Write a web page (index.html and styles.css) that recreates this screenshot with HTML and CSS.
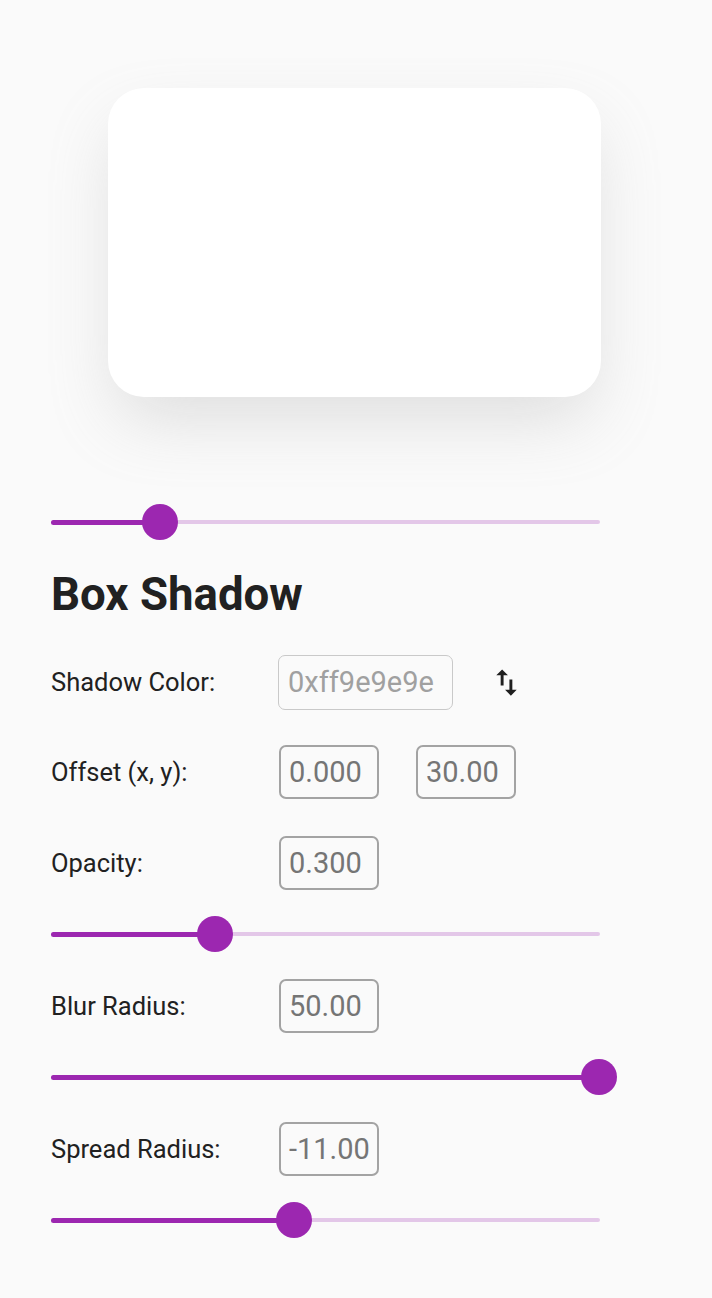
FILE: index.html
```html
<!DOCTYPE html>
<html>
<head>
<meta charset="utf-8">
<link rel="stylesheet" href="styles.css">
</head>
<body>
<div class="page">
  <div class="preview">
    <div class="card"></div>
  </div>
  <div class="controls">
    <div class="slider slider-top">
      <div class="track"></div>
      <div class="fill" style="width: 19.85%"></div>
      <div class="thumb" style="left: 19.85%"></div>
    </div>
    <h1 class="title">Box Shadow</h1>

    <div class="field-row row-first">
      <span class="label">Shadow Color:</span>
      <div class="input input-wide input-muted">0xff9e9e9e</div>
      <span class="swap-icon">
        <svg viewBox="0 0 24 24" width="35" height="35"><path d="M16 17.01V10h-2v7.01h-3L15 21l4-3.99h-3zM9 3L5 6.99h3V14h2V6.99h3L9 3z" fill="#1f1f1f"/></svg>
      </span>
    </div>

    <div class="field-row row-next">
      <span class="label">Offset (x, y):</span>
      <div class="input">0.000</div>
      <div class="input input-second">30.00</div>
    </div>

    <div class="field-row row-next row-next-b">
      <span class="label">Opacity:</span>
      <div class="input">0.300</div>
    </div>
    <div class="slider">
      <div class="track"></div>
      <div class="fill" style="width: 29.96%"></div>
      <div class="thumb" style="left: 29.96%"></div>
    </div>

    <div class="field-row row-after-slider">
      <span class="label">Blur Radius:</span>
      <div class="input">50.00</div>
    </div>
    <div class="slider">
      <div class="track"></div>
      <div class="fill" style="width: 99.8%"></div>
      <div class="thumb" style="left: 99.8%"></div>
    </div>

    <div class="field-row row-after-slider">
      <span class="label">Spread Radius:</span>
      <div class="input">-11.00</div>
    </div>
    <div class="slider">
      <div class="track"></div>
      <div class="fill" style="width: 44.26%"></div>
      <div class="thumb" style="left: 44.26%"></div>
    </div>
  </div>
</div>
</body>
</html>
```

FILE: styles.css
```css
* {
  box-sizing: border-box;
}

html, body {
  margin: 0;
  padding: 0;
  background: #fafafa;
}

body {
  font-family: Roboto, "Noto Sans", sans-serif;
  color: #212121;
}

.page {
  width: 712px;
  min-height: 1298px;
  padding-top: 88px;
}

.preview {
  display: flex;
  padding-left: 108px;
}

.card {
  width: 493px;
  height: 309px;
  background: #ffffff;
  border-radius: 36px;
  box-shadow: 0 30px 68px -11px rgba(158, 158, 158, 0.32);
}

.controls {
  width: 549px;
  margin-left: 51px;
  display: flex;
  flex-direction: column;
}

.slider {
  position: relative;
  height: 44px;
  margin-top: 22px;
}

.slider-top {
  margin-top: 103px;
}

.track {
  position: absolute;
  left: 0;
  right: 0;
  top: 20px;
  height: 4px;
  border-radius: 2px;
  background: #e3c7e8;
}

.fill {
  position: absolute;
  left: 0;
  top: 19.5px;
  height: 5px;
  border-radius: 3px;
  background: #9c27b0;
}

.thumb {
  position: absolute;
  top: 4px;
  width: 36px;
  height: 36px;
  margin-left: -18px;
  border-radius: 50%;
  background: #9c27b0;
}

.title {
  margin: 25px 0 0 0;
  font-size: 45.6px;
  line-height: 52px;
  font-weight: 700;
  color: #212121;
}

.field-row {
  display: flex;
  align-items: center;
  height: 54px;
}

.row-first {
  margin-top: 34px;
}

.row-next {
  margin-top: 36px;
}

.row-next-b {
  margin-top: 37px;
}

.row-after-slider {
  margin-top: 23px;
}

.label {
  width: 228px;
  flex: none;
  font-size: 25.5px;
  color: #212121;
}

.input {
  width: 100px;
  height: 54px;
  border: 2px solid #a3a3a3;
  border-radius: 7px;
  padding-left: 8px;
  font-size: 29px;
  line-height: 50px;
  color: #757575;
}

.input-wide {
  width: 175px;
  height: 55px;
  margin-left: -1px;
}

.input-muted {
  border: 1px solid #c9c9c9;
  color: #a0a0a0;
  padding-left: 9px;
  line-height: 52px;
}

.input-second {
  margin-left: 37px;
}

.swap-icon {
  display: flex;
  margin-left: 36px;
}
```
